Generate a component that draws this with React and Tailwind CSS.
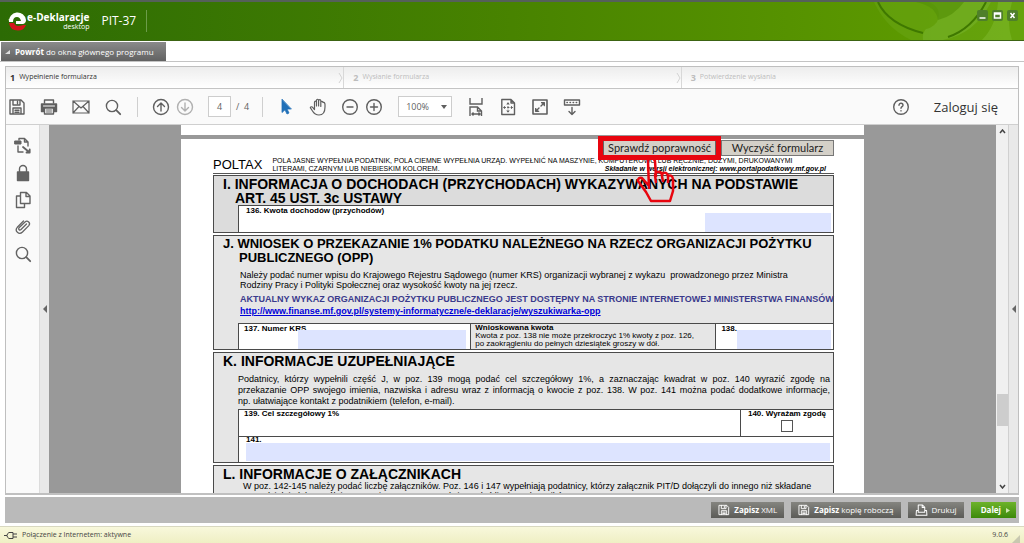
import React from 'react';

const Icon = ({ size = 18, children, className = '', ...rest }) => (
    <svg
        width={size}
        height={size}
        viewBox="0 0 18 18"
        fill="none"
        stroke="currentColor"
        strokeWidth="1.4"
        strokeLinecap="round"
        strokeLinejoin="round"
        aria-hidden="true"
        className={`shrink-0 ${className}`}
        {...rest}
    >
        {children}
    </svg>
);

const SaveIcon = ({ size }) => (
    <Icon size={size}>
        <path d="M2 2h11l3 3v11H2zM5 2v5h7V2M9.500 3.500v2M5 16v-6h8v6M7 12.200h4M7 14.200h4" />
    </Icon>
);

const SearchIcon = () => (
    <Icon>
        <circle cx="8" cy="8" r="5.600" />
        <path d="M12.200 12.200l4 4" strokeWidth="1.800" />
    </Icon>
);

const PrintIcon = () => (
    <Icon>
        <path d="M4.500 5V2h9v3" />
        <path d="M1.500 6h15v7.500h-15z" fill="currentColor" />
        <path d="M3.500 8h11" stroke="#fafafa" strokeWidth="1" />
        <path d="M4.500 10h9v6h-9z" fill="#fafafa" />
        <path d="M6.500 12h5M6.500 14h5" strokeWidth="1" />
    </Icon>
);

const MailIcon = () => (
    <Icon strokeWidth="1.200">
        <path d="M1 3h16v12H1zM1 3l8 7 8-7M1 15l6-6.500M17 15l-6-6.500" />
    </Icon>
);

const Divider = () => <span className="h-5 w-px bg-[#cfcfcf]" />;

const ToolButton = ({ label, className = '', children }) => (
    <button type="button" aria-label={label} className={`flex items-center ${className}`}>
        {children}
    </button>
);

const Header = () => (
    <header className="relative flex h-[41px] shrink-0 items-center overflow-hidden border-t-2 border-b border-t-[#55605a] border-b-[#3c6413] bg-linear-to-r from-[#2c6b04] via-[#488300] to-[#629f00] pl-2 text-white">
        <svg className="absolute top-0 right-0 h-full w-40" viewBox="0 0 160 38" aria-hidden="true">
            <path d="M10 0q12 26 37 38H160V0z" fill="#6fac20" opacity=".35" />
            <path d="M14 0q10 22 45 31" stroke="#3f7800" strokeWidth="2" fill="none" />
            <path d="M62 27q-4 4-3 11h20q32-6 48-38H65q14 6 8 20-5 6-11 7z" fill="#7ab530" opacity=".5" />
            <path d="M52 0q20 4 22 18 16-4 26-18z" fill="#569208" opacity=".7" />
            <path d="M84 35q24-8 38-35" stroke="#3f7800" strokeWidth="2" fill="none" />
            <path d="M118 38q14-14 16-38h14q-6 20 0 38z" fill="#86c038" opacity=".4" />
        </svg>
        <svg width="19" height="19" viewBox="0 0 19 19" className="shrink-0" aria-hidden="true">
            <path d="M1 10A8.500 8.500 0 0 1 18 8q0 3-3 4H8V9h5q-1-4-4-4-4 0-4 5z" fill="#fff" />
            <path d="M1 11h5q1 3 4 3 3 0 5-1h3q-2 5.500-8 5.500-8 0-9-7.500z" fill="#d4161c" />
            <path d="M0 8l4-2v3z" fill="#fff" />
        </svg>
        <div className="flex flex-col items-end font-['Open_Sans',sans-serif]">
            <span className="text-[10px] leading-[12px] font-bold">e-Deklaracje</span>
            <span className="text-[7px] leading-[8px]">desktop</span>
        </div>
        <h1 className="ml-3 font-['Open_Sans',sans-serif] text-[12px] leading-4">PIT-37</h1>
        <span className="ml-[10px] h-[22px] w-px bg-[#6c9c4a]" />
        <div className="relative mr-[6px] mb-3 ml-auto flex gap-1">
            {[
                ['Minimalizuj', 'M2 8h6'],
                ['Maksymalizuj', 'M2 3h6v5H2zM2 4h6'],
                ['Zamknij', 'M3 3l4 5M7 3l-4 5'],
            ].map(([label, d]) => (
                <button key={label} type="button" aria-label={label} className="rounded-xs bg-[#4f7f2a]">
                    <svg width="11" height="11" viewBox="0 0 10 11" fill="none" stroke="#fff" strokeWidth="1.500">
                        <path d={d} />
                    </svg>
                </button>
            ))}
        </div>
    </header>
);

const steps = [
    { no: 1, label: 'Wypełnienie formularza', active: true },
    { no: 2, label: 'Wysłanie formularza' },
    { no: 3, label: 'Potwierdzenie wysłania' },
];

const Steps = () => (
    <ol className="grid h-[22px] shrink-0 grid-cols-3 border-b border-[#c4c4c4] bg-linear-to-b from-[#ededed] to-white font-['Open_Sans',sans-serif]">
        {steps.map(({ no, label, active }, i) => (
            <li
                key={no}
                className={`flex items-center gap-1 border-l border-[#d8d8d8] pl-[9px] first:border-l-0 first:pl-1 ${active ? 'text-[#333]' : 'text-[#bdbdbd]'}`}
            >
                <span className="text-[9px] font-bold">{no}</span>
                <span className="text-[7px]">{label}</span>
                {i < 2 && (
                    <svg width="5" height="12" viewBox="0 0 5 12" className="ml-auto" fill="none" stroke="#d4d4d4" aria-hidden="true">
                        <path d="M1 1l3 5-3 5" />
                    </svg>
                )}
            </li>
        ))}
    </ol>
);

const Toolbar = () => (
    <div className="flex h-9 shrink-0 items-center border-b border-[#cfcfcf] bg-[#fafafa] pr-5 pl-[2px] font-['Open_Sans',sans-serif] text-[#5f5f5f]">
        <div className="flex gap-[14px]">
            <ToolButton label="Zapisz"><SaveIcon /></ToolButton>
            <ToolButton label="Drukuj"><PrintIcon /></ToolButton>
            <ToolButton label="Wyślij"><MailIcon /></ToolButton>
            <ToolButton label="Szukaj"><SearchIcon /></ToolButton>
        </div>
        <div className="ml-[15px] flex items-center">
            <Divider />
            <ToolButton label="Poprzednia strona" className="ml-[14px]">
                <Icon>
                    <circle cx="9" cy="9" r="7.500" />
                    <path d="M9 13V5M5.500 8.500L9 5l3.500 3.500" />
                </Icon>
            </ToolButton>
            <ToolButton label="Następna strona" className="ml-[6px] text-[#b0b0b0]">
                <Icon>
                    <circle cx="9" cy="9" r="7.500" />
                    <path d="M9 5v8M5.500 9.500L9 13l3.500-3.500" />
                </Icon>
            </ToolButton>
            <input
                aria-label="Strona"
                defaultValue="4"
                className="ml-[14px] h-[21px] w-[23px] border border-[#cdcdcd] bg-white text-center text-[9px]"
            />
            <span className="ml-[5px] text-[9px] whitespace-pre">/  4</span>
        </div>
        <div className="ml-[13px] flex items-center">
            <Divider />
            <ToolButton label="Zaznacz" className="ml-[14px] text-[#2170b8]">
                <Icon>
                    <path d="M5 1.500v13l3-2.700 2 4.200 2-1-2-4h4z" fill="currentColor" strokeWidth=".8" />
                </Icon>
            </ToolButton>
            <ToolButton label="Przesuń" className="ml-[14px]">
                <Icon strokeWidth="1.200">
                    <path d="M5.500 10V4.200a1 1 0 0 1 2 0V8M7.500 8V2.300a1 1 0 0 1 2.100 0V8M9.600 8V2.800a1 1 0 0 1 2.200 0V8.500M11.800 8.500V4.500a1 1 0 0 1 2.200 0C16.500 4 16 7 16 9c0 5-2 8-6 8-3 0-5-1.500-6.500-4L1.300 9.600c.4-1.200 1.800-1 2.600 0L5.500 11.500V9" />
                </Icon>
            </ToolButton>
            <ToolButton label="Pomniejsz" className="ml-[14px]">
                <Icon>
                    <circle cx="9" cy="9" r="7.300" />
                    <path d="M6 9h6" />
                </Icon>
            </ToolButton>
            <ToolButton label="Powiększ" className="ml-[6px]">
                <Icon>
                    <circle cx="9" cy="9" r="7.300" />
                    <path d="M5.500 9h7M9 5.500v7" />
                </Icon>
            </ToolButton>
            <div className="relative ml-[15px] flex">
                <select
                    aria-label="Powiększenie"
                    className="h-[21px] w-[54px] appearance-none border border-[#cdcdcd] bg-white pl-[7px] text-[9px]"
                >
                    <option>100%</option>
                    <option>150%</option>
                </select>
                <svg width="6" height="4" viewBox="0 0 6 4" className="pointer-events-none absolute top-[9px] right-[5px]" aria-hidden="true">
                    <path d="M0 0h6L3 4z" fill="currentColor" />
                </svg>
            </div>
            <div className="ml-[15px] flex gap-[14px]">
                <ToolButton label="Dopasuj szerokość">
                    <Icon strokeLinecap="butt" strokeLinejoin="miter">
                        <path d="M3 0v6h12V0M3 18V9h7.500l4 4v5M10.500 9v4h4M5 16h8M6.500 14.500L5 16l1.500 1.500M11.500 14.500L13 16l-1.500 1.500" />
                    </Icon>
                </ToolButton>
                <ToolButton label="Dopasuj stronę">
                    <Icon>
                        <path d="M2.800 1.500h9.200l3.500 3.500v11.500H2.800zM12 1.500V5h3.500" />
                        <path d="M9 5v8M5 9.500h8" strokeDasharray="1.500 2" strokeWidth="1.100" />
                        <path d="M8 6l1-1.200L10 6M8 13l1 1.200L10 13M5.800 8.500l-1.200 1 1.200 1M12.300 8.500l1.200 1-1.200 1" strokeWidth="1" />
                    </Icon>
                </ToolButton>
                <ToolButton label="Pełny ekran">
                    <Icon>
                        <path d="M2 2h14v14H2z" strokeWidth="1.600" />
                        <path d="M10 8l3-3M8 10l-3 3" />
                        <path d="M10.500 4.500h3v3zM4.500 10.500v3h3z" fill="currentColor" strokeWidth="1" />
                    </Icon>
                </ToolButton>
                <ToolButton label="Pokaż pasek">
                    <Icon>
                        <path d="M1.500 2h15v5h-15z" />
                        <path d="M4 4.500h11" strokeWidth="1.600" strokeDasharray=".3 2.800" />
                        <path d="M9 9.500v7M6 13.500l3 3 3-3" />
                    </Icon>
                </ToolButton>
            </div>
        </div>
        <div className="ml-auto flex items-center gap-6">
            <ToolButton label="Pomoc">
                <Icon>
                    <circle cx="9" cy="9" r="7.300" />
                    <path d="M7 7.200c0-2.700 4-2.600 4 0 0 1.400-2 1.500-2 3M9 12.600v.3" />
                </Icon>
            </ToolButton>
            <a href="#login" className="text-[13px] leading-4 text-[#333]">Zaloguj się</a>
        </div>
    </div>
);

const Sidebar = () => (
    <nav className="flex w-[33px] shrink-0 flex-col items-center gap-[9px] bg-[#fafafa] pt-3 text-[#636363]">
        <ToolButton label="Konwertuj">
            <Icon>
                <path d="M5 3V1.500h5.500L14 5v4M10.500 1.500V5H14M4 9v6h5" />
                <path d="M1 4h6v3H1z" fill="currentColor" strokeWidth="1" />
                <path d="M9 10l6 5M12.500 15.500h3.200v-3" strokeWidth="1.800" />
            </Icon>
        </ToolButton>
        <ToolButton label="Zabezpieczenia">
            <Icon>
                <path d="M3.500 8h11v8.500h-11z" fill="currentColor" />
                <path d="M5.500 8V5a3.500 3.500 0 0 1 7 0v3" />
            </Icon>
        </ToolButton>
        <ToolButton label="Strony">
            <Icon>
                <path d="M6.500 1.500h6l3.500 3.500v7.500H6.500zM12 1.500v4h4M6.500 5H2.500v11.500h8v-4" />
            </Icon>
        </ToolButton>
        <ToolButton label="Załączniki">
            <Icon strokeWidth="1.300">
                <path d="M12.500 6L7 11.500c-1.500 1.300-3-.3-2-1.700L11 4c2.500-2.200 6 .9 3.800 3.600L8.500 14c-3.500 3.300-8.300-1-5.200-4.700L9.500 3" />
            </Icon>
        </ToolButton>
        <ToolButton label="Szukaj w dokumencie"><SearchIcon /></ToolButton>
    </nav>
);

const Section = ({ children, className = 'bg-[#e6e6e6]' }) => (
    <section className={`mb-[2px] border border-[#4a4a4a] ${className}`}>{children}</section>
);

const Title = ({ children, size = 'text-[14px]' }) => (
    <h2 className={`pt-px pl-[9px] leading-[14px] font-bold whitespace-nowrap ${size}`}>{children}</h2>
);

const field = 'bg-[#dde4ff] px-1 outline-none';

const FormPage = () => (
    <div className="mx-auto w-full max-w-[683px] font-['Liberation_Sans',Arial,sans-serif] text-black">
        <div className="h-[10px] bg-white" />
        <article className="mt-1 bg-white pr-[30px] pl-8">
            <div className="flex h-[18px] justify-end gap-[5px] pt-px font-[Lato,sans-serif] text-[11px] leading-[14px] text-[#222]">
                <button type="button" className="relative h-4 w-[113px] border border-[#666] bg-[#d4d0c8] whitespace-nowrap">
                    Sprawdź poprawność
                    <span className="absolute -inset-x-[6px] -inset-y-[5px] border-[5px] border-[#e8050f]" />
                    <svg
                        width="40"
                        height="46"
                        viewBox="0 0 40 46"
                        className="absolute top-4 left-8 z-10"
                        fill="none"
                        stroke="#e8050f"
                        strokeWidth="2.500"
                        strokeLinejoin="round"
                        aria-hidden="true"
                    >
                        <path d="M13 32L12 4q0-3 3-3t4 3l1 16M20 26l-1-8q1-4 4-3 3 0 3 4l1 6M26 18q1-3 4-2 2 1 2 4v6M32 19q4-2 5 3v12l-3 10H15L10 35 2 24q0-4 4-3l7 8" />
                    </svg>
                </button>
                <button type="button" className="h-4 w-[113px] border border-[#777] bg-[#d4d0c8] whitespace-nowrap">
                    Wyczyść formularz
                </button>
            </div>
            <div className="flex h-[17px] gap-[10px] border-b border-[#555] text-[7px] leading-[8px]">
                <span className="text-[13px] leading-[15px]">POLTAX</span>
                <div className="flex-1">
                    <p className="whitespace-nowrap">
                        POLA JASNE WYPEŁNIA PODATNIK, POLA CIEMNE WYPEŁNIA URZĄD. WYPEŁNIĆ NA MASZYNIE, KOMPUTEROWO LUB RĘCZNIE, DUŻYMI, DRUKOWANYMI
                    </p>
                    <p className="flex justify-between pr-2 whitespace-nowrap">
                        <span>LITERAMI, CZARNYM LUB NIEBIESKIM KOLOREM.</span>
                        <b className="italic">Składanie w wersji elektronicznej: www.portalpodatkowy.mf.gov.pl</b>
                    </p>
                </div>
            </div>

            <div className="pt-px">
                <Section className="bg-[#dcdcdc]">
                    <Title>
                        I. INFORMACJA O DOCHODACH (PRZYCHODACH) WYKAZYWANYCH NA PODSTAWIE
                        <span className="block pl-3">ART. 45 UST. 3c USTAWY</span>
                    </Title>
                    <div className="ml-6 flex h-[27px] items-end justify-between border-t border-l border-[#4a4a4a] bg-white pr-[2px] pl-[7px]">
                        <label htmlFor="p136" className="self-start text-[8px] leading-[10px] font-bold">136. Kwota dochodów (przychodów)</label>
                        <input id="p136" className={`h-[19px] w-[126px] ${field}`} />
                    </div>
                </Section>

                <Section>
                    <Title size="text-[13px]">
                        J. WNIOSEK O PRZEKAZANIE 1% PODATKU NALEŻNEGO NA RZECZ ORGANIZACJI POŻYTKU
                        <span className="block pl-4">PUBLICZNEGO (OPP)</span>
                    </Title>
                    <div className="pl-[26px] text-[9px] leading-[10px] whitespace-nowrap">
                        <p className="pt-[5px]">
                            Należy podać numer wpisu do Krajowego Rejestru Sądowego (numer KRS) organizacji wybranej z wykazu&nbsp; prowadzonego przez Ministra
                            <br />
                            Rodziny Pracy i Polityki Społecznej oraz wysokość kwoty na jej rzecz.
                        </p>
                        <p className="pt-[3px] leading-3 font-bold text-[#3a3a8c]">
                            AKTUALNY WYKAZ ORGANIZACJI POŻYTKU PUBLICZNEGO JEST DOSTĘPNY NA STRONIE INTERNETOWEJ MINISTERSTWA FINANSÓW
                        </p>
                        <a href="#opp" className="block leading-3 font-bold text-[#0000d8] underline">
                            http://www.finanse.mf.gov.pl/systemy-informatyczne/e-deklaracje/wyszukiwarka-opp
                        </a>
                    </div>
                    <div className="mt-[6px] ml-6 grid h-[26px] grid-cols-[232fr_246fr_117fr] border-t border-l border-[#4a4a4a] text-[8px] leading-[8px] whitespace-nowrap">
                        <div className="flex items-end justify-between border-r border-[#4a4a4a] bg-white pr-1 pl-[5px]">
                            <label htmlFor="p137" className="self-start pt-px font-bold">137. Numer KRS</label>
                            <input id="p137" className={`-ml-2 h-[19px] w-[168px] ${field}`} />
                        </div>
                        <p className="border-r border-[#4a4a4a] pl-1">
                            <b className="block">Wnioskowana kwota</b>
                            Kwota z poz. 138 nie może przekroczyć 1% kwoty z poz. 126,
                            <br />
                            po zaokrągleniu do pełnych dziesiątek groszy w dół.
                        </p>
                        <div className="flex items-end justify-between bg-white pr-[2px] pl-[5px]">
                            <label htmlFor="p138" className="self-start pt-px font-bold">138.</label>
                            <input id="p138" className={`h-[19px] w-[94px] ${field}`} />
                        </div>
                    </div>
                </Section>

                <Section>
                    <Title>K. INFORMACJE UZUPEŁNIAJĄCE</Title>
                    <p className="pt-[6px] pr-[3px] pl-6 text-[9px] leading-[11px]">
                        <span className="block [text-align-last:justify]">
                            Podatnicy, którzy wypełnili część J, w poz. 139 mogą podać cel szczegółowy 1%, a zaznaczając kwadrat w poz. 140 wyrazić zgodę na
                        </span>
                        <span className="block [text-align-last:justify]">
                            przekazanie OPP swojego imienia, nazwiska i adresu wraz z informacją o kwocie z poz. 138. W poz. 141 można podać dodatkowe informacje,
                        </span>
                        np. ułatwiające kontakt z podatnikiem (telefon, e-mail).
                    </p>
                    <div className="mt-[2px] ml-6 border-l border-[#4a4a4a] bg-white text-[8px] leading-[8px] font-bold">
                        <div className="flex h-[27px] border-t border-[#4a4a4a]">
                            <label htmlFor="p139" className="pl-[5px]">139. Cel szczegółowy 1%</label>
                            <input id="p139" className="min-w-0 flex-1 outline-none" />
                            <div className="flex w-[93px] flex-col items-center border-l border-[#4a4a4a]">
                                <label htmlFor="p140">140. Wyrażam zgodę</label>
                                <input id="p140" type="checkbox" className="mt-[2px] h-3 w-3 appearance-none border border-[#555] bg-white" />
                            </div>
                        </div>
                        <div className="flex h-[26px] flex-col border-t border-[#4a4a4a] pr-[3px] pl-[7px]">
                            <label htmlFor="p141" className="h-[6px] leading-[6px]">141.</label>
                            <input id="p141" className={`h-[18px] w-full ${field}`} />
                        </div>
                    </div>
                </Section>

                <Section>
                    <Title>L. INFORMACJE O ZAŁĄCZNIKACH</Title>
                    <p className="pl-[29px] text-[9px] leading-[10px] whitespace-nowrap">
                        W poz. 142-145 należy podać liczbę załączników. Poz. 146 i 147 wypełniają podatnicy, którzy załącznik PIT/D dołączyli do innego niż składane
                        <br />
                        samodzielnie lub wspólnie zeznania. W poz. 148 należy podać liczbę załączników.
                    </p>
                </Section>
            </div>
        </article>
    </div>
);

const Viewer = () => (
    <main className="flex min-h-0 flex-1 border-b-2 border-[#c0c0c0]">
        <Sidebar />
        <button type="button" aria-label="Zwiń panel" className="flex w-[10px] shrink-0 items-center justify-center border-l border-[#dcdcdc] bg-[#e9e9e9] text-[#666]">
            <svg width="4" height="8" viewBox="0 0 4 8"><path d="M4 0v8L0 4z" fill="currentColor" /></svg>
        </button>
        <div className="min-w-0 flex-1 overflow-hidden bg-[#999]">
            <FormPage />
        </div>
        <div className="relative flex w-3 shrink-0 flex-col items-center justify-between bg-[#f0f0f0] py-1 text-[#444]">
            <svg width="7" height="5" viewBox="0 0 7 5" fill="none" stroke="currentColor" strokeWidth="1.500"><path d="M1 4l2.500-3L6 4" /></svg>
            <span className="absolute top-[73%] h-8 w-[11px] bg-[#cdcdcd]" />
            <svg width="7" height="5" viewBox="0 0 7 5" fill="none" stroke="currentColor" strokeWidth="1.500"><path d="M1 1l2.500 3L6 1" /></svg>
        </div>
        <button type="button" aria-label="Pokaż panel" className="flex w-[10px] shrink-0 items-center justify-center border-l border-[#d0d0d0] bg-[#e9e9e9] text-[#666]">
            <svg width="4" height="8" viewBox="0 0 4 8"><path d="M4 0v8L0 4z" fill="currentColor" /></svg>
        </button>
    </main>
);

const Action = ({ children, className = 'from-[#858580] to-[#5c5c58]' }) => (
    <button type="button" className={`flex h-4 items-center gap-1 bg-linear-to-b px-[7px] text-[8px] leading-3 whitespace-pre text-white ${className}`}>
        {children}
    </button>
);

const Footer = () => (
    <div className="mx-[5px] mt-[2px] flex h-[26px] shrink-0 items-center justify-end gap-[7px] bg-[#bababa] pr-[3px] font-['Open_Sans',sans-serif]">
        <Action><SaveIcon size={12} /><span><b>Zapisz</b> XML</span></Action>
        <Action><SaveIcon size={12} /><span><b>Zapisz</b> kopię roboczą</span></Action>
        <Action>
            <Icon size={13}>
                <path d="M4.500 11V1.500h6l3 3V11M10 2v3h3.500M4.500 9H2l-.5 6.500h15L16 9h-2.500M4.500 11.500h9" />
            </Icon>
            Drukuj
        </Action>
        <Action className="from-[#6db32a] to-[#3c8a08] pr-[4px] pl-[10px]">
            <b>Dalej</b>
            <svg width="7" height="5" viewBox="0 0 7 5"><path d="M1 0l4 2.500L1 5z" fill="#cfe8b0" /></svg>
        </Action>
    </div>
);

export default function App() {
    return (
        <div className="flex h-screen flex-col overflow-hidden bg-white">
            <Header />
            <div className="flex h-[21px] shrink-0 border-b border-[#c4c4c4] pt-px pl-px">
                <a href="#start" className="flex items-center gap-[5px] bg-linear-to-b from-[#8a8a8a] to-[#626262] pr-3 pl-1 font-['Open_Sans',sans-serif] text-[8px] text-white">
                    <svg width="5" height="4" viewBox="0 0 5 4"><path d="M5 0v4H0z" fill="#ddd" /></svg>
                    <span><b>Powrót</b> do okna głównego programu</span>
                </a>
            </div>
            <div className="mx-[5px] mt-1 flex min-h-0 flex-1 flex-col border border-b-0 border-[#bfbfbf]">
                <Steps />
                <Toolbar />
                <Viewer />
            </div>
            <Footer />
            <footer className="mt-[3px] flex h-[17px] shrink-0 items-center gap-1 border-t border-[#d8d8c0] bg-linear-to-b from-[#f8f8dc] to-[#efefc4] px-1 font-['Open_Sans',sans-serif] text-[7px] text-[#444]">
                <svg width="14" height="9" viewBox="0 0 14 9" fill="none" stroke="currentColor" aria-hidden="true">
                    <path d="M0 4.500h3M5 1.500h4v6H5q-2-1-2-3t2-3zM9 3h4M9 6h4" />
                </svg>
                <span>Połączenie z Internetem: aktywne</span>
                <span className="ml-auto">9.0.6</span>
                <svg width="8" height="8" viewBox="0 0 8 8" className="self-end" aria-hidden="true"><path d="M8 0v8H0z" fill="#c8c8b0" /></svg>
            </footer>
        </div>
    );
}
